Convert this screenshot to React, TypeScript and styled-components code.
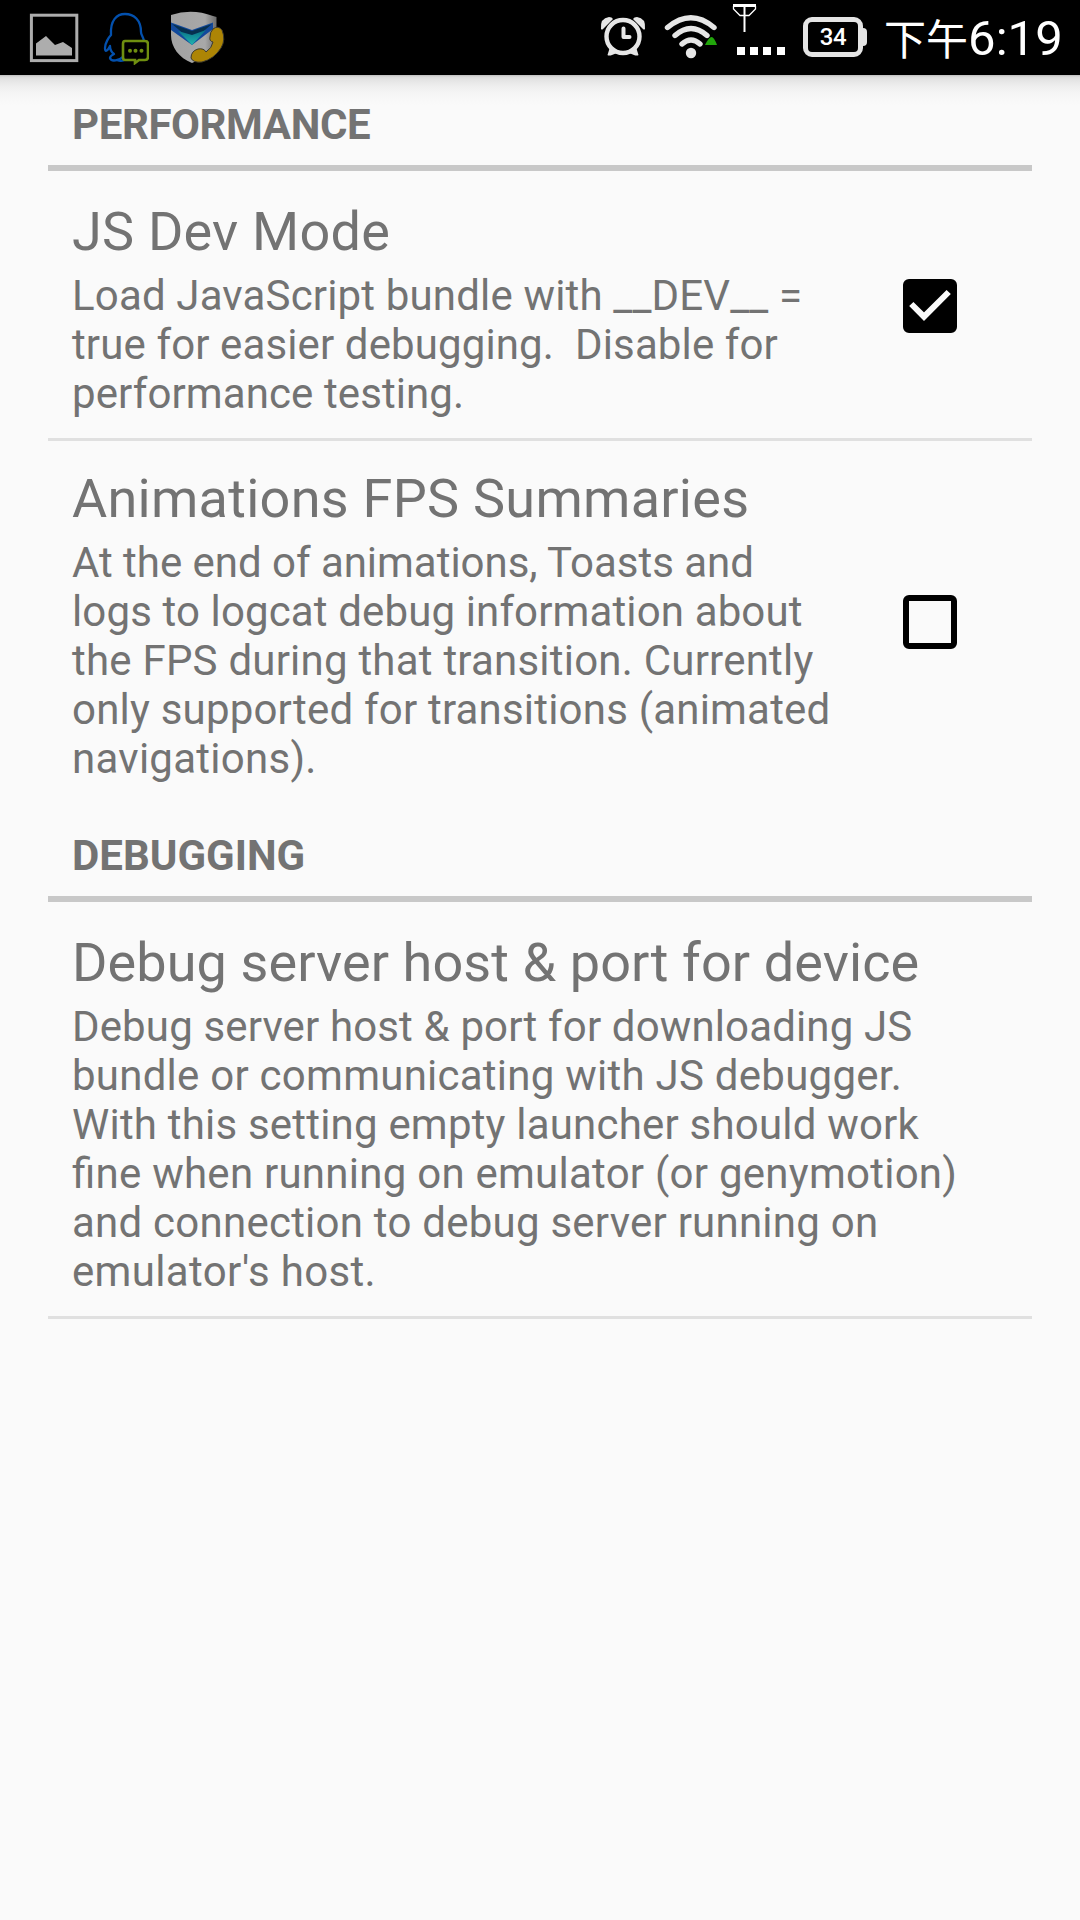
import React from "react";
import styled, { createGlobalStyle } from "styled-components";

const GlobalStyle = createGlobalStyle`
  * { box-sizing: border-box; }
  body { margin: 0; background: #fafafa; }
`;

const Screen = styled.div`
  width: 1080px;
  height: 1920px;
  overflow: hidden;
  background: #fafafa;
  color: #737373;
  font-family: Roboto, "Noto Sans CJK SC", sans-serif;
`;

const StatusBar = styled.header`
  display: flex;
  justify-content: space-between;
  height: 75px;
  background: #000;
`;

const Notifications = styled.div`
  display: flex;
  padding: 10px 0 0 29px;
`;

const SystemIcons = styled.div`
  display: flex;
  align-items: flex-start;
`;

const Glyph = styled.svg<{ $gap?: number }>`
  display: block;
  flex: none;
  margin-left: ${(p) => p.$gap ?? 0}px;
`;

const Battery = styled.div`
  display: flex;
  margin: 17px 0 0 18px;
`;

const BatteryBody = styled.div`
  width: 60px;
  height: 40px;
  border: 5px solid #e4e4e4;
  border-radius: 9px;
  color: #fff;
  font-size: 24px;
  font-weight: 500;
  letter-spacing: -0.4px;
  line-height: 31px;
  text-align: center;
`;

const BatteryTip = styled.div`
  width: 4px;
  height: 18px;
  margin-top: 11px;
  border-radius: 0 4px 4px 0;
  background: #e4e4e4;
`;

const Clock = styled.div`
  display: flex;
  width: 213px;
  padding-left: 17px;
  color: #fff;
  white-space: nowrap;
`;

const Period = styled.span`
  font: 400 42px/73px "Noto Sans CJK SC", sans-serif;
`;

const Time = styled.span`
  font-size: 49px;
  letter-spacing: 0.1px;
  line-height: 77px;
`;

const Shade = styled.div`
  height: 30px;
  margin-bottom: -30px;
  background: linear-gradient(#bdbdbd 0, #dcdcdc 2px, #e4e4e4 5px, #eeeeee 11px, #f5f5f5 18px, #fafafa 30px);
`;

const List = styled.main`
  padding: 0 48px;
`;

const Category = styled.h2<{ $track?: number }>`
  height: 96px;
  margin: 0 0 3px;
  padding: 25px 24px 0;
  border-bottom: 6px solid #c8c8c8;
  font-size: 42px;
  font-weight: 700;
  letter-spacing: ${(p) => p.$track ?? 0}px;
  line-height: 50px;
`;

const Row = styled.section<{ $divider?: boolean }>`
  display: flex;
  align-items: center;
  justify-content: space-between;
  padding: 24px 75px 20px 24px;
  border-bottom: 3px solid ${(p) => (p.$divider ? "#e0e0e0" : "transparent")};
`;

const Title = styled.h3<{ $track: number }>`
  margin: 0 0 6px;
  font-size: 54px;
  font-weight: 400;
  letter-spacing: ${(p) => p.$track}px;
  line-height: 67px;
  white-space: nowrap;
`;

const Summary = styled.p`
  margin: 0;
  font-size: 42px;
  line-height: 49px;
`;

const Line = styled.span<{ $track: number }>`
  display: block;
  font-feature-settings: "liga" 1;
  letter-spacing: ${(p) => p.$track}px;
  white-space: pre;
`;

const Texts = styled.div`
  flex: none;
`;

const Box = styled.div<{ $checked?: boolean }>`
  width: 54px;
  height: 54px;
  margin-bottom: 4px;
  border: 6px solid #000;
  border-radius: 6px;
  background: ${(p) => (p.$checked ? "#000" : "transparent")};
`;

const Tick = styled.svg`
  display: block;
  width: 42px;
  height: 42px;
`;

function PictureIcon() {
  return (
    <Glyph width="50" height="55" viewBox="0 0 50 55">
      <rect x="2.4" y="5.2" width="45.400" height="45.400" fill="none" stroke="#adadad" strokeWidth="3" />
      <path d="M7 45.500V33.500L17 26L26 35L34 32L43 38V45.500Z" fill="#adadad" />
    </Glyph>
  );
}

function PenguinIcon() {
  return (
    <Glyph $gap={24} width="46" height="55" viewBox="0 0 46 55">
      <path
        d="M21 46C16 51 8 52 7 48C7 46 9 45 11 44C8 42 7 39 7 36C4 42 2 42 2 38C2 33 6 27 8 25C7 10 14 4 22 4C31 4 38 10 38 22C38 25 40 26 41 31"
        fill="none" stroke="#0350ad" strokeWidth="2.3" strokeLinejoin="round"
      />
      <path d="M14 50Q19 52 23 49" fill="none" stroke="#0350ad" strokeWidth="2.3" />
      <path d="M22 31H42Q45 31 45 34V47Q45 50 42 50H36L32 53V50H22Q20 50 20 47V34Q20 31 22 31Z" fill="#000" stroke="#6f8f10" strokeWidth="2.6" />
      <g fill="#6f8f10">
        <circle cx="27" cy="40.7" r="2" /><circle cx="32.5" cy="40.7" r="2" /><circle cx="38.5" cy="40.7" r="2" />
      </g>
    </Glyph>
  );
}

function ShieldIcon() {
  return (
    <Glyph $gap={20} width="56" height="55" viewBox="0 0 56 55">
      <defs>
        <linearGradient id="shield" x1="0" x2="1"><stop stopColor="#a2a2a2" /><stop offset=".75" stopColor="#a8a8a8" /><stop offset="1" stopColor="#6c6c6c" /></linearGradient>
        <linearGradient id="teal" x1="0" x2="0" y1="0" y2="1"><stop stopColor="#086f85" /><stop offset="1" stopColor="#22b5b0" /></linearGradient>
      </defs>
      <path d="M2 5Q23-2 44 6L47.500 7V25C46 39 35 48 23 53C10 48 2 37 2 25Z" fill="url(#shield)" />
      <path d="M2 12.500L23 20L44 12.500V19L23 35L2 20Z" fill="#12499b" />
      <path d="M3 14L23 21L43 14L23 31Z" fill="#063050" />
      <path d="M9 21L23 25L37 20L23 35Z" fill="url(#teal)" />
      <path d="M44 19Q49 15 53 20Q57 30 52 38Q45 49 33 52Q24 53 22 48Q22 41 29 39Q35 38 37 42Q43 38 44 32Q40 31 41 27Q41 22 44 19Z" fill="#ad8505" stroke="#3d3a2c" strokeWidth="1" />
    </Glyph>
  );
}

function AlarmIcon() {
  return (
    <Glyph $gap={1} width="46" height="75" viewBox="0 0 46 75">
      <g fill="none" stroke="#e6e6e6">
        <circle cx="23" cy="36.5" r="16.5" strokeWidth="4.4" />
        <path d="M23.5 28.5V37H29.500" strokeWidth="4" strokeLinejoin="round" strokeLinecap="round" />
      </g>
      <path d="M1 29Q0 18 9 17Q12 17 13 19L3 29Q2 30 1 29ZM45 29Q46 18 37 17Q34 17 33 19L43 29Q44 30 45 29Z" fill="#e6e6e6" />
      <path d="M10 47L7.5 55Q9 57 18 52.500L28 52.500Q37 57 38.500 55L36 47Q23 57 10 47Z" fill="#e6e6e6" />
    </Glyph>
  );
}

function WifiIcon() {
  return (
    <Glyph $gap={17} width="54" height="75" viewBox="0 0 54 75">
      <g fill="none" stroke="#e6e6e6" strokeWidth="5.400" strokeLinecap="round">
        <path d="M4.500 27.500Q28 8 51 27.500" />
        <path d="M12 35.500Q28 21.500 44 35.500" />
        <path d="M19 44Q28 36 37 44" />
      </g>
      <circle cx="28" cy="53" r="5.200" fill="#e6e6e6" />
      <path d="M42 45Q46 37 48.500 37Q51 37 54 45Z" fill="#21a60b" stroke="#000" strokeWidth="1" paintOrder="stroke" />
    </Glyph>
  );
}

function SignalIcon() {
  return (
    <Glyph $gap={14} width="54" height="75" viewBox="0 0 54 75">
      <path d="M2 4H25V7H2Z M12.500 4H14.500V32H12.500Z" fill="#fff" />
      <path d="M2.500 6V9L9 15.500H18L24.500 9V6" fill="none" stroke="#fff" strokeWidth="1.300" />
      <path d="M6 47h8v8H6zM19 47h8v8h-8zM32 47h8v8h-8zM46 47h8v8h-8z" fill="#fff" />
    </Glyph>
  );
}

function Checkbox({ checked }: { checked?: boolean }) {
  return (
    <Box $checked={checked}>
      {checked && (
        <Tick viewBox="0 0 42 42">
          <path d="M2.300 19L15 31.700L39.700 7" fill="none" stroke="#fafafa" strokeWidth="6" />
        </Tick>
      )}
    </Box>
  );
}

type TextLine = [text: string, track: number];

function Texting({ title, lines }: { title: TextLine; lines: TextLine[] }) {
  return (
    <Texts>
      <Title $track={title[1]}>{title[0]}</Title>
      <Summary>
        {lines.map(([text, track]) => (
          <Line key={text} $track={track}>{text}</Line>
        ))}
      </Summary>
    </Texts>
  );
}

const DEV_MODE: TextLine[] = [
  ["Load JavaScript bundle with __DEV__ =", 0.16],
  ["true for easier debugging.  Disable for", 0.12],
  ["performance testing.", 0.1],
];

const ANIMATIONS: TextLine[] = [
  ["At the end of animations, Toasts and", -0.03],
  ["logs to logcat debug information about", 0.13],
  ["the FPS during that transition. Currently", 0.22],
  ["only supported for transitions (animated", 0.2],
  ["navigations).", 0.27],
];

const SERVER: TextLine[] = [
  ["Debug server host & port for downloading JS", 0.14],
  ["bundle or communicating with JS debugger.", 0.25],
  ["With this setting empty launcher should work", 0.2],
  ["fine when running on emulator (or genymotion)", 0.25],
  ["and connection to debug server running on", 0.24],
  ["emulator's host.", 0.34],
];

export default function App() {
  return (
    <Screen>
      <GlobalStyle />
      <StatusBar>
        <Notifications>
          <PictureIcon />
          <PenguinIcon />
          <ShieldIcon />
        </Notifications>
        <SystemIcons>
          <AlarmIcon />
          <WifiIcon />
          <SignalIcon />
          <Battery>
            <BatteryBody>34</BatteryBody>
            <BatteryTip />
          </Battery>
          <Clock>
            <Period>下午</Period>
            <Time>6:19</Time>
          </Clock>
        </SystemIcons>
      </StatusBar>
      <Shade />
      <List>
        <Category $track={-0.4}>PERFORMANCE</Category>
        <Row $divider>
          <Texting title={["JS Dev Mode", 0.22]} lines={DEV_MODE} />
          <Checkbox checked />
        </Row>
        <Row>
          <Texting title={["Animations FPS Summaries", 0.27]} lines={ANIMATIONS} />
          <Checkbox />
        </Row>
        <Category>DEBUGGING</Category>
        <Row $divider>
          <Texting title={["Debug server host & port for device", 0.1]} lines={SERVER} />
        </Row>
      </List>
    </Screen>
  );
}
